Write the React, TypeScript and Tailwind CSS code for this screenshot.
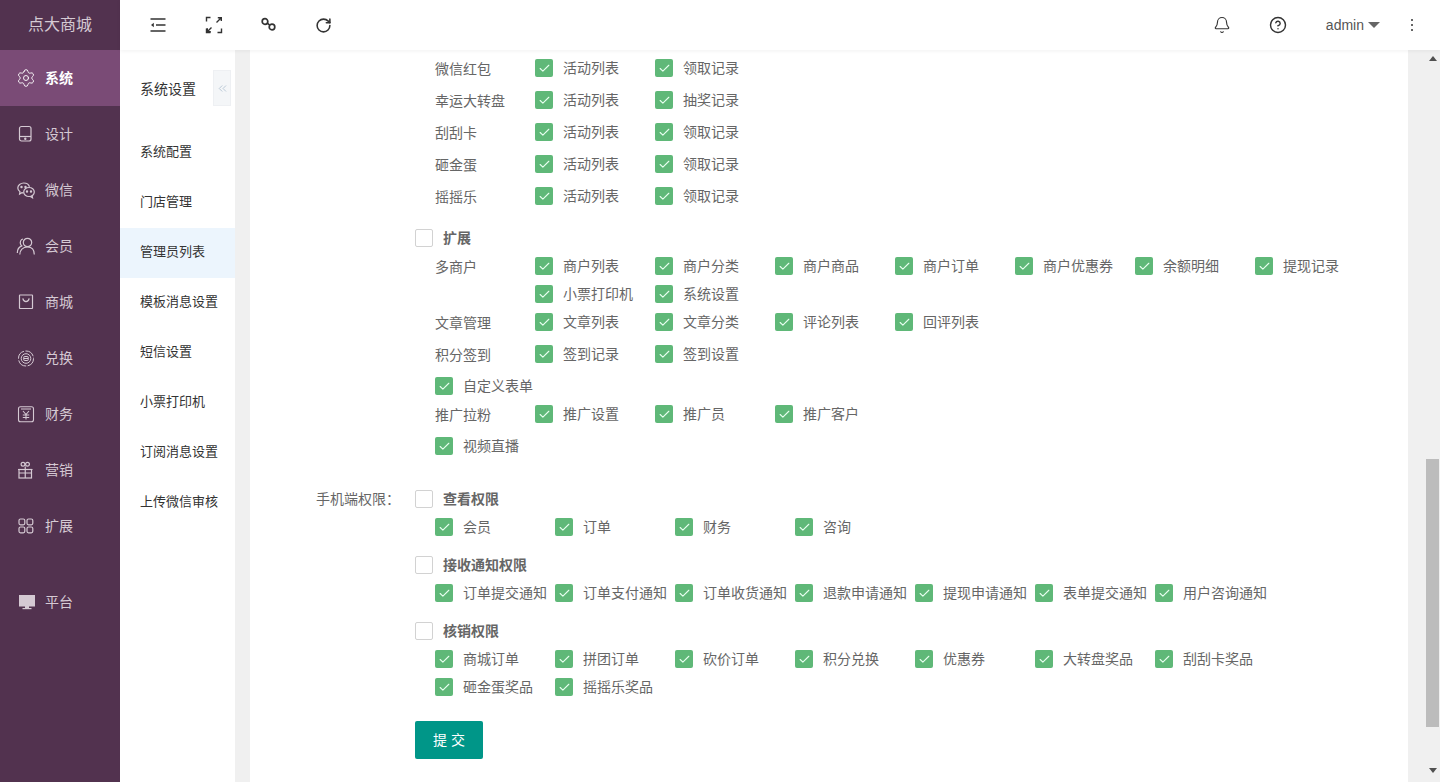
import React from "react";
import { Settings, Bell, RotateCw, ChevronsLeft, Check, CircleHelp } from "lucide-react";

const Stroke = ({ children, size = 20, sw = 1.2 }: { children: React.ReactNode; size?: number; sw?: number }) => (
  <svg width={size} height={size} viewBox="0 0 20 20" fill="none" stroke="currentColor" strokeWidth={sw}>{children}</svg>
);

const GearIcon = () => <Settings size={20} strokeWidth={1.1} />;
const TabletIcon = () => <Stroke><rect x="3.5" y="2.5" width="11.500" height="14.500" rx="2" /><path d="M3.500 12.500h11.500" /><circle cx="9.300" cy="14.700" r=".6" fill="currentColor" /></Stroke>;
const WechatIcon = () => <Stroke><path d="M13.500 6.800C12.800 4.600 10.500 3 7.800 3 4.500 3 1.800 5.200 1.800 8c0 1.600.8 2.900 2.200 3.800L3.600 14l2.300-1.300c.5.100 1 .2 1.600.2" /><ellipse cx="13" cy="12" rx="5.300" ry="4.500" /><path d="m16 15.700.5 2-2.200-1.300" /><circle cx="5.500" cy="7" r=".6" fill="currentColor" /><circle cx="9.500" cy="7" r=".6" fill="currentColor" /><circle cx="11" cy="11.500" r=".6" fill="currentColor" /><circle cx="15" cy="11.500" r=".6" fill="currentColor" /></Stroke>;
const MemberIcon = () => <Stroke><circle cx="11.500" cy="6.500" r="4.200" /><path d="M3.800 18.500c0-4.300 3-7.500 7.700-7.500s6.800 3.200 6.800 7.500" /><path d="M7 3C4.500 3.600 3.800 6.300 4.600 8.300c.3.700.7 1.200 1.200 1.600C3 11 1.300 13.800 1.300 17" /></Stroke>;
const BagIcon = () => <Stroke><rect x="3.500" y="3" width="13" height="13.500" rx=".5" /><path d="M6.800 6.300c.5 2.200 1.900 3.300 3.200 3.300s2.700-1.100 3.200-3.300" /></Stroke>;
const ExchangeIcon = () => <Stroke sw={1}><circle cx="10" cy="10.500" r="7.500" strokeDasharray="10 1.500" /><circle cx="10" cy="10.500" r="4.800" /><rect x="7.800" y="8.500" width="4.400" height="4" rx=".5" /><path d="M7.800 10.500h4.400" /></Stroke>;
const YenIcon = () => <Stroke sw={1.1}><rect x="2.500" y="2.800" width="15" height="15" rx="2" /><path d="M5 5h10M7 7l3 3.500L13 7M6.800 11h6.400M6.800 13.500h6.400M10 10.500v5" /></Stroke>;
const GiftIcon = () => <Stroke><rect x="3" y="9.500" width="12.500" height="8.500" /><path d="M2 9.500h14.500M9.250 6.500v11.500M3 13h12.500" /><circle cx="7" cy="4.300" r="1.900" /><circle cx="11.500" cy="4.300" r="1.900" /></Stroke>;
const GridIcon = () => <Stroke><rect x="3" y="3" width="5.800" height="5.800" rx="1.500" /><rect x="11" y="3" width="5.800" height="5.800" rx="1.500" /><rect x="3" y="11" width="5.800" height="5.800" rx="1.500" /><rect x="11" y="11" width="5.800" height="5.800" rx="1.500" /></Stroke>;
const MonitorIcon = () => <svg width="20" height="20" viewBox="0 0 20 20" fill="currentColor"><rect x="3" y="3" width="16" height="11.500" /><rect x="9" y="14" width="4" height="2.500" /><rect x="6.500" y="16" width="9" height="1.200" /><rect x="4" y="4" width="14" height="9.300" fill="#d5c9d3" /></svg>;

const OutdentIcon = () => <svg width="18" height="18" viewBox="0 0 18 18" fill="none" stroke="currentColor" strokeWidth="1.500"><path d="M1.500 3h15M7 9h9.500M1.500 15h15" /><path d="M4.800 6.800v4.400L2 9Z" fill="currentColor" stroke="none" /></svg>;
const FullscreenIcon = () => <svg width="18" height="18" viewBox="0 0 18 18" fill="none" stroke="currentColor" strokeWidth="1.400"><path d="M1.500 5.500v-4h4M1.500 12.500v4h4M16.500 12.500v4h-4" /><path d="M11.500 6.500l4.500-4.500M12.800 1.800h3.500V5M6.500 11.500 2.500 15.500M2.300 12.300v3.500h3.500" /></svg>;
const LinkIcon = () => <svg width="16" height="16" viewBox="0 0 16 16" fill="none" stroke="currentColor" strokeWidth="1.700"><circle cx="4" cy="4.500" r="2.800" /><circle cx="11" cy="10" r="2.800" /><path d="M6.300 6.200 8.700 8.200" /></svg>;

const nav: { label: string; Icon: React.FC; active?: boolean; gap?: boolean }[] = [
  { label: "系统", Icon: GearIcon, active: true },
  { label: "设计", Icon: TabletIcon },
  { label: "微信", Icon: WechatIcon },
  { label: "会员", Icon: MemberIcon },
  { label: "商城", Icon: BagIcon },
  { label: "兑换", Icon: ExchangeIcon },
  { label: "财务", Icon: YenIcon },
  { label: "营销", Icon: GiftIcon },
  { label: "扩展", Icon: GridIcon },
  { label: "平台", Icon: MonitorIcon, gap: true },
];

const sub = ["系统配置", "门店管理", "管理员列表", "模板消息设置", "短信设置", "小票打印机", "订阅消息设置", "上传微信审核"];

const Box = ({ checked }: { checked?: boolean }) =>
  checked ? (
    <span className="flex h-[18px] w-[18px] shrink-0 items-center justify-center rounded-[2px] bg-[#5fb878]">
      <Check size={13} strokeWidth={2} color="#e8fff0" />
    </span>
  ) : (
    <span className="block h-[18px] w-[18px] shrink-0 rounded-[2px] border border-[#d2d2d2] bg-white" />
  );

const Item = ({ text }: { text: string }) => (
  <div className="flex h-[28px] w-[120px] items-center">
    <Box checked />
    <span className="ml-[10px] whitespace-nowrap text-[#666]">{text}</span>
  </div>
);

const Row = ({ label, items, mb = true }: { label: string; items: string[]; mb?: boolean }) => (
  <div className={`ml-[20px] flex ${mb ? "mb-[4px]" : ""}`}>
    <div className="h-[28px] w-[100px] shrink-0 pt-[1px] leading-[28px] text-[#666]">{label}</div>
    <div className="flex w-[840px] flex-wrap">
      {items.map((t) => <Item key={t} text={t} />)}
    </div>
  </div>
);

const Head = ({ text, label }: { text: string; label?: string }) => (
  <div className="relative flex h-[18px] items-center">
    {label && <span className="absolute right-[100%] mr-[15px] whitespace-nowrap text-[#666]">{label}</span>}
    <Box />
    <span className="ml-[10px] font-bold text-[#666]">{text}</span>
  </div>
);

const Items = ({ items }: { items: string[] }) => (
  <div className="ml-[20px] mt-[5px] flex w-[840px] flex-wrap">
    {items.map((t) => <Item key={t} text={t} />)}
  </div>
);

export default function App() {
  return (
    <div className="flex h-[782px] w-[1440px] overflow-hidden bg-[#f0f0f0] text-[14px] [font-family:'Liberation_Sans','Noto_Sans_CJK_SC',sans-serif]">
      <aside className="flex w-[120px] shrink-0 flex-col bg-[#52324f] text-[14px] text-[#d5c9d3]">
        <div className="flex h-[50px] items-center justify-center text-[16px]">点大商城</div>
        {nav.map(({ label, Icon, active, gap }) => (
          <div key={label} className={`flex h-[56px] items-center pl-[16px] ${active ? "bg-[#7a4b76] font-bold text-white" : ""} ${gap ? "mt-[20px]" : ""}`}>
            <Icon />
            <span className="ml-[9px]">{label}</span>
          </div>
        ))}
      </aside>
      <div className="flex min-w-0 flex-1 flex-col">
        <header className="z-10 flex h-[50px] shrink-0 items-center bg-white pl-[29px] pr-[27px] text-[#333] shadow-[0_1px_4px_rgba(0,0,0,0.06)]">
          <OutdentIcon />
          <span className="ml-[38px]"><FullscreenIcon /></span>
          <span className="ml-[38px]"><LinkIcon /></span>
          <span className="ml-[38px]"><RotateCw size={17} strokeWidth={2.2} /></span>
          <span className="ml-auto"><Bell size={18} strokeWidth={1.5} /></span>
          <span className="ml-[38px]"><CircleHelp size={18} strokeWidth={1.9} /></span>
          <span className="ml-[39px] text-[14px] text-[#555]">admin</span>
          <span className="ml-[4px] h-0 w-0 border-x-[6px] border-t-[6px] border-x-transparent border-t-[#666]" />
          <span className="ml-[31px] flex flex-col gap-[3px]">
            <span className="h-[2px] w-[2px] rounded-full bg-[#333]" />
            <span className="h-[2px] w-[2px] rounded-full bg-[#333]" />
            <span className="h-[2px] w-[2px] rounded-full bg-[#333]" />
          </span>
        </header>
        <div className="flex min-h-0 flex-1">
          <nav className="relative w-[115px] shrink-0 bg-white text-[13px] text-[#333]">
            <div className="flex h-[78px] items-center pl-[20px] text-[14px]">系统设置</div>
            {sub.map((s) => (
              <div key={s} className={`flex h-[50px] items-center pb-[3px] pl-[20px] ${s === "管理员列表" ? "bg-[#ecf5fd]" : ""}`}>{s}</div>
            ))}
            <div className="absolute left-[93px] top-[20px] flex h-[36px] w-[18px] items-center justify-center border border-[#eef0f3] bg-[#f4f6f8] text-[#b8c7d6]">
              <ChevronsLeft size={13} strokeWidth={1.8} />
            </div>
          </nav>
          <main className="ml-[15px] w-[1158px] shrink-0 bg-white pl-[165px] pt-[4px]">
            <Row label="微信红包" items={["活动列表", "领取记录"]} />
            <Row label="幸运大转盘" items={["活动列表", "抽奖记录"]} />
            <Row label="刮刮卡" items={["活动列表", "领取记录"]} />
            <Row label="砸金蛋" items={["活动列表", "领取记录"]} />
            <Row label="摇摇乐" items={["活动列表", "领取记录"]} />
            <div className="mt-[19px]"><Head text="扩展" /></div>
            <div className="mt-[5px]">
              <Row label="多商户" mb={false} items={["商户列表", "商户分类", "商户商品", "商户订单", "商户优惠券", "余额明细", "提现记录", "小票打印机", "系统设置"]} />
              <Row label="文章管理" items={["文章列表", "文章分类", "评论列表", "回评列表"]} />
              <Row label="积分签到" items={["签到记录", "签到设置"]} />
              <div className="ml-[20px]"><Item text="自定义表单" /></div>
              <Row label="推广拉粉" items={["推广设置", "推广员", "推广客户"]} />
              <div className="ml-[20px]"><Item text="视频直播" /></div>
            </div>
            <div className="mt-[30px]"><Head text="查看权限" label="手机端权限：" /></div>
            <Items items={["会员", "订单", "财务", "咨询"]} />
            <div className="mt-[15px]"><Head text="接收通知权限" /></div>
            <Items items={["订单提交通知", "订单支付通知", "订单收货通知", "退款申请通知", "提现申请通知", "表单提交通知", "用户咨询通知"]} />
            <div className="mt-[15px]"><Head text="核销权限" /></div>
            <Items items={["商城订单", "拼团订单", "砍价订单", "积分兑换", "优惠券", "大转盘奖品", "刮刮卡奖品", "砸金蛋奖品", "摇摇乐奖品"]} />
            <button className="mt-[20px] h-[38px] w-[68px] rounded-[2px] bg-[#009688] text-[14px] text-white">提 交</button>
          </main>
          <div className="ml-[17px] flex w-[15px] flex-col items-center bg-[#f0f0f0]">
            <span className="mt-[6px] h-0 w-0 border-x-[4px] border-b-[5px] border-x-transparent border-b-[#505050]" />
            <div className="mt-[398px] h-[268px] w-[13px] bg-[#bcbcbc]" />
            <span className="mt-[41px] h-0 w-0 border-x-[4px] border-t-[5px] border-x-transparent border-t-[#505050]" />
          </div>
        </div>
      </div>
    </div>
  );
}
